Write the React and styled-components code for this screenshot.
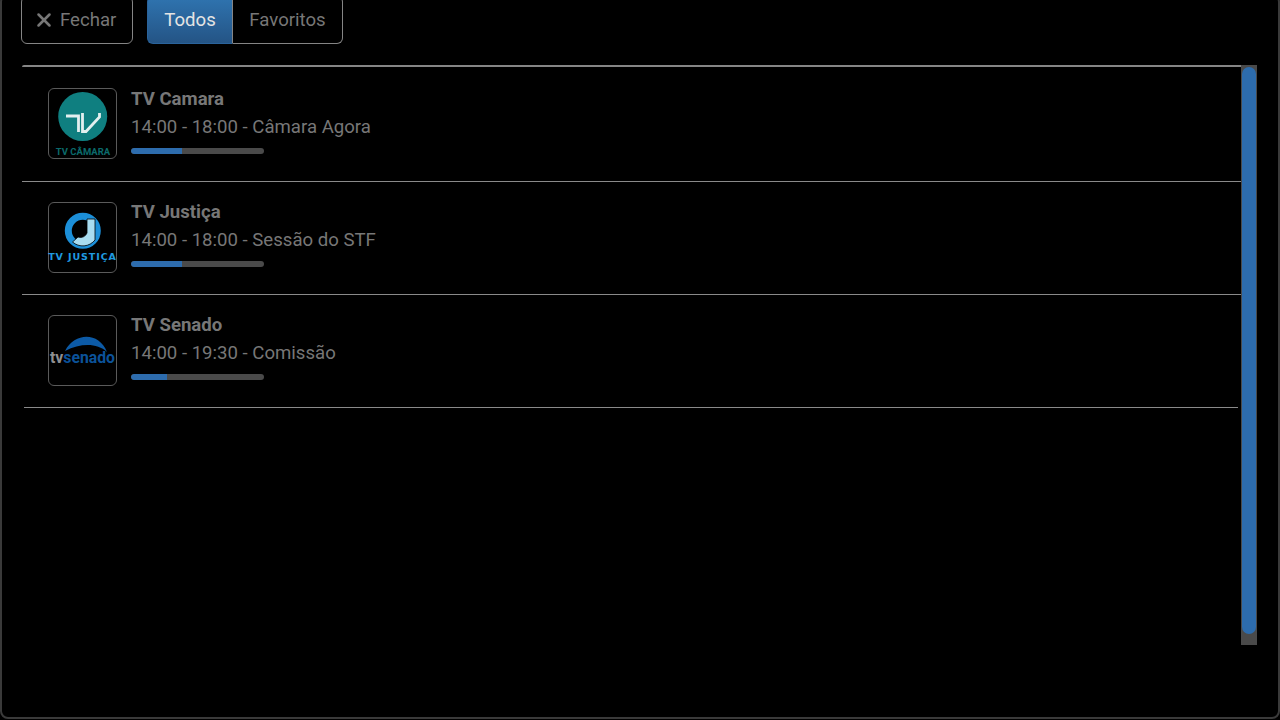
import React from "react";
import styled, { createGlobalStyle } from "styled-components";
import { X } from "lucide-react";

const Global = createGlobalStyle`
  html, body {
    margin: 0;
    height: 100%;
    background: #000;
    overflow: hidden;
  }
  body {
    font-family: Roboto, "Liberation Sans", sans-serif;
  }
`;

const Frame = styled.div`
  box-sizing: border-box;
  height: 725px;
  margin-top: -6px;
  border: 2px solid #3a3a3a;
  border-radius: 8px;
  padding: 0 21px 0 20px;
  display: flex;
  flex-direction: column;
`;

const Toolbar = styled.div`
  display: flex;
  gap: 14px;
  height: 48px;
  margin-left: -1px;
  flex: none;
`;

const Button = styled.button`
  display: flex;
  align-items: center;
  gap: 5px;
  box-sizing: border-box;
  height: 100%;
  width: 112px;
  padding: 0 0 0 11px;
  background: #000;
  border: 1px solid #858585;
  border-radius: 6px;
  color: #777;
  font: 400 18.6px Roboto, sans-serif;
`;

const Segment = styled.div`
  display: flex;
  height: 100%;
`;

const SegmentButton = styled.button`
  box-sizing: border-box;
  height: 100%;
  width: ${(p) => p.$width}px;
  padding: 0;
  font: 400 18.6px Roboto, sans-serif;
  border: 1px solid ${(p) => (p.$active ? "#2a639b" : "#858585")};
  border-left: ${(p) => (p.$active ? "1px solid #2a639b" : "none")};
  border-right: 1px solid #858585;
  border-radius: ${(p) => (p.$active ? "6px 0 0 6px" : "0 6px 6px 0")};
  background: ${(p) =>
    p.$active ? "linear-gradient(#2f74b0, #245485)" : "#000"};
  color: ${(p) => (p.$active ? "#e4e4e4" : "#777")};
`;

const Body = styled.div`
  display: flex;
  margin-top: 21px;
  height: 580px;
  flex: none;
`;

const List = styled.div`
  flex: 1;
  border-top: 2px solid #858585;
  border-top-left-radius: 2px;
`;

const Row = styled.div`
  box-sizing: border-box;
  height: ${(p) => (p.$first ? 115 : 113)}px;
  display: flex;
  align-items: flex-start;
  gap: 14px;
  padding: ${(p) => (p.$first ? 21 : 20)}px 0 0 ${(p) => (p.$last ? 24 : 26)}px;
  border-bottom: 1px solid #8a8a8a;
  margin: ${(p) => (p.$last ? "0 3px 0 2px" : "0")};
`;

const Logo = styled.div`
  box-sizing: border-box;
  width: 69px;
  height: 71px;
  flex: none;
  border: 1px solid #5a5a5a;
  border-radius: 6px;
  background: #000;
  display: flex;
  svg {
    display: block;
    overflow: visible;
  }
`;

const Info = styled.div`
  display: flex;
  flex-direction: column;
  margin-top: ${(p) => (p.$first ? 1 : 0)}px;
`;

const Name = styled.div`
  font-weight: 700;
  font-size: 18.6px;
  line-height: 21px;
  color: #777;
`;

const Show = styled.div`
  font-size: 18.6px;
  line-height: 21px;
  margin-top: 7px;
  color: #777;
`;

const Track = styled.div`
  width: 133px;
  height: 6px;
  margin-top: 10px;
  border-radius: 3px;
  background: #4a4a4a;
  overflow: hidden;
`;

const Fill = styled.div`
  height: 100%;
  border-radius: 3px 0 0 3px;
  background: #2d6cad;
`;

const Scrollbar = styled.div`
  box-sizing: border-box;
  width: 16px;
  flex: none;
  background: #4a4a4a;
  padding: 2px 1px 11px;
  display: flex;
`;

const Thumb = styled.div`
  flex: 1;
  border-radius: 7px;
  background: #2d6cad;
`;

const CamaraLogo = () => (
  <svg width="67" height="69" viewBox="0 0 67 69">
    <circle cx="33.7" cy="27.5" r="24.5" fill="#0f7f80" />
    <path d="M17 27 H29.5 V43" fill="none" stroke="#e2efef" strokeWidth="2.8" />
    <path d="M33.5 24 V42.5 H37 L50.5 28 V24" fill="none" stroke="#e2efef" strokeWidth="2.8" />
    <text x="34" y="66" textAnchor="middle" fontFamily="Roboto, sans-serif" fontWeight="700" fontSize="9.5" fill="#0b6b6c">
      TV CÂMARA
    </text>
  </svg>
);

const JusticaLogo = () => (
  <svg width="67" height="69" viewBox="0 0 67 69">
    <circle cx="33.8" cy="27.7" r="14.5" fill="none" stroke="#1c8fd8" strokeWidth="7" />
    <path d="M23.5 39 A15.5 15.5 0 0 0 46 37 V16 H38 V30 A7 7 0 0 1 29 34 Z" fill="#a8dcf0" stroke="#000" strokeWidth="0.8" />
    <text x="33.5" y="57" textAnchor="middle" fontFamily="'DejaVu Sans', sans-serif" fontWeight="700" fontSize="9.5" letterSpacing="0.9" fill="#1f9ae0">
      TV JUSTIÇA
    </text>
  </svg>
);

const SenadoLogo = () => (
  <svg width="67" height="69" viewBox="0 0 67 69">
    <path d="M16 35 C26 16 50 16 58 36 C48 27 32 27 16 35 Z" fill="#0c5aa6" />
    <text x="1" y="47" fontFamily="Roboto, sans-serif" fontWeight="700" fontSize="17" textLength="65" lengthAdjust="spacingAndGlyphs" fill="#8f8f8f">
      tv
      <tspan fill="#0b5299">senado</tspan>
    </text>
  </svg>
);

const channels = [
  { name: "TV Camara", show: "14:00 - 18:00 - Câmara Agora", pct: 38, logo: <CamaraLogo /> },
  { name: "TV Justiça", show: "14:00 - 18:00 - Sessão do STF", pct: 38, logo: <JusticaLogo /> },
  { name: "TV Senado", show: "14:00 - 19:30 - Comissão", pct: 27, logo: <SenadoLogo /> },
];

export default function App() {
  return (
    <>
      <Global />
      <Frame>
        <Toolbar>
          <Button>
            <X size={22} strokeWidth={2.8} />
            Fechar
          </Button>
          <Segment>
            <SegmentButton $active $width={86}>Todos</SegmentButton>
            <SegmentButton $width={110}>Favoritos</SegmentButton>
          </Segment>
        </Toolbar>
        <Body>
          <List>
            {channels.map((c, i) => (
              <Row key={c.name} $first={i === 0} $last={i === channels.length - 1}>
                <Logo>{c.logo}</Logo>
                <Info $first={i === 0}>
                  <Name>{c.name}</Name>
                  <Show>{c.show}</Show>
                  <Track>
                    <Fill style={{ width: `${c.pct}%` }} />
                  </Track>
                </Info>
              </Row>
            ))}
          </List>
          <Scrollbar>
            <Thumb />
          </Scrollbar>
        </Body>
      </Frame>
    </>
  );
}
